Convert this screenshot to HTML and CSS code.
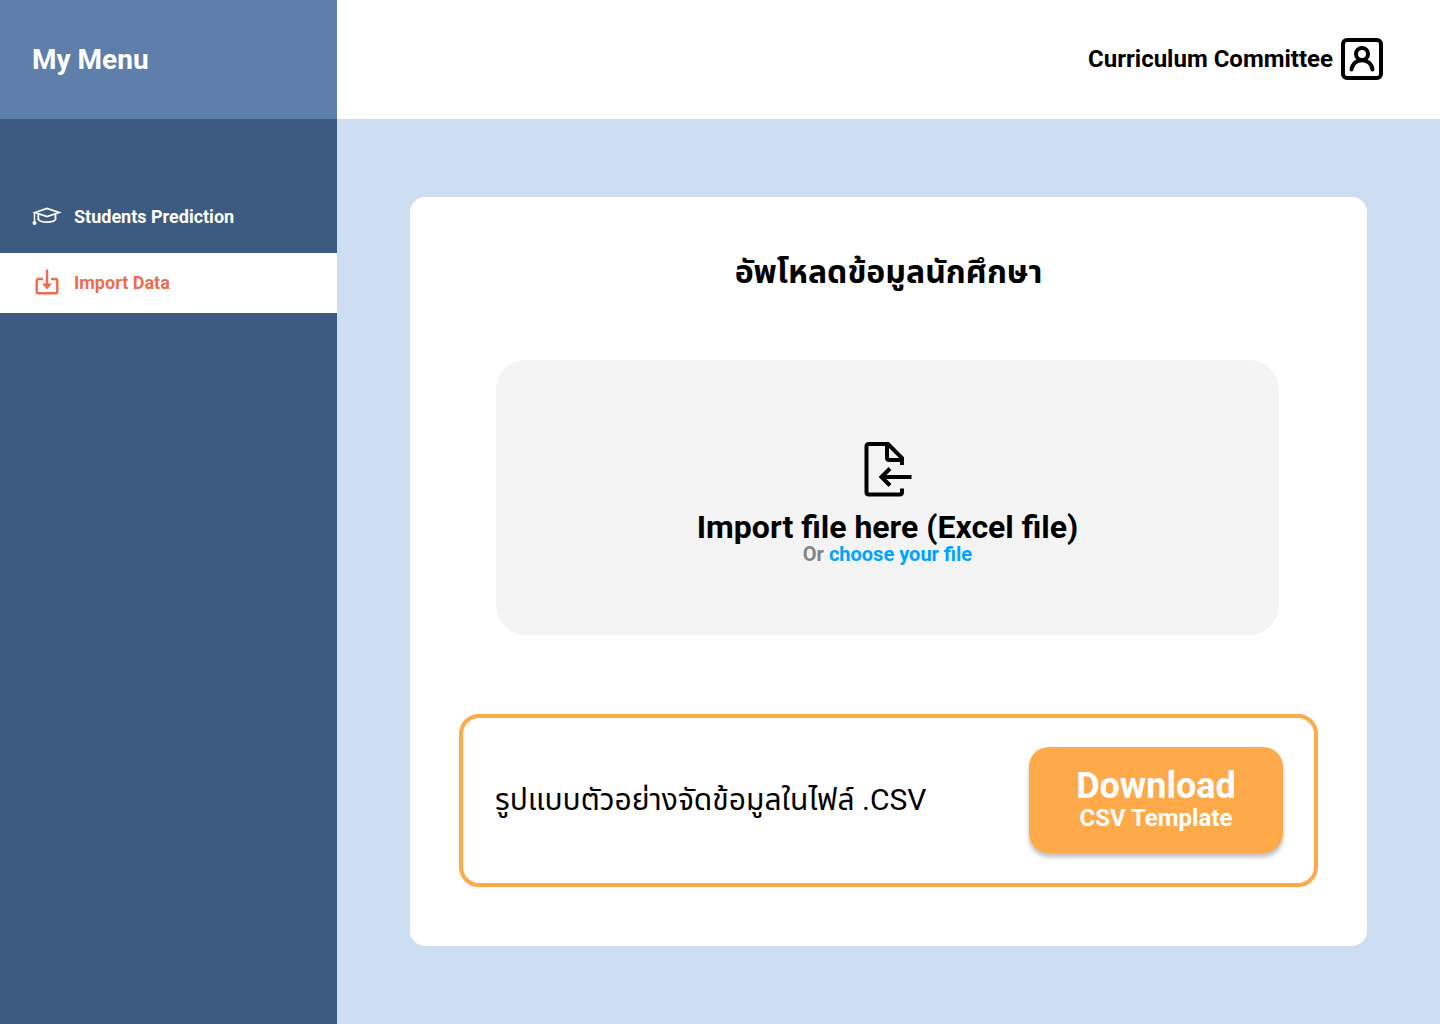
FILE: index.html
```html
<!DOCTYPE html>
<html lang="en">
<head>
<meta charset="utf-8">
<meta name="viewport" content="width=device-width, initial-scale=1">
<title>Import Data</title>
<link rel="stylesheet" href="styles.css">
</head>
<body>
<div class="app">
  <aside class="sidebar">
    <div class="sidebar-title">My Menu</div>
    <nav class="menu">
      <a class="menu-item" href="#students">
        <svg class="menu-icon" viewBox="0 0 30 30" fill="none" stroke="currentColor" stroke-width="1.800" aria-hidden="true">
          <path d="M3 11.500L15 7.500L27 11.500L15 15.500Z"/>
          <path d="M6.300 13V18.500C9 22 21 22 23.500 18.500V13"/>
          <path d="M2.500 11V21" stroke-width="1.500"/>
          <circle cx="2.500" cy="22" r="2" fill="currentColor" stroke="none"/>
        </svg>
        <span>Students Prediction</span>
      </a>
      <a class="menu-item active" href="#import" aria-current="page">
        <svg class="menu-icon" viewBox="0 0 30 30" fill="none" stroke="currentColor" stroke-width="2.400" aria-hidden="true">
          <path d="M11 12H6.500Q4.700 12 4.700 13.800V24.500Q4.700 26.300 6.500 26.300H23.500Q25.300 26.300 25.300 24.500V13.800Q25.300 12 23.500 12H19"/>
          <path d="M15 2.500V18"/>
          <path d="M10 16.500H20L15 22.500Z" fill="currentColor" stroke="none"/>
        </svg>
        <span>Import Data</span>
      </a>
    </nav>
  </aside>
  <div class="page">
    <header class="topbar">
      <span>Curriculum Committee</span>
      <svg class="user-icon" viewBox="0 0 42 42" fill="none" stroke="currentColor" stroke-width="4" stroke-linecap="round" aria-hidden="true">
        <rect x="2" y="2" width="38" height="38" rx="4"/>
        <circle cx="21" cy="16" r="6"/>
        <path d="M10.500 31.500C12 19 30 19 31.500 31.500"/>
      </svg>
    </header>
    <main class="content">
      <section class="card">
        <h1 class="card-title" lang="th">อัพโหลดข้อมูลนักศึกษา</h1>
        <div class="dropzone">
          <svg class="file-icon" viewBox="0 0 48 56" fill="none" stroke="currentColor" stroke-width="4" aria-hidden="true">
            <path d="M38 23V16L24 2H5Q2.500 2 2.500 4.500V50Q2.500 52.500 5 52.500H35.500Q38 52.500 38 50V46.500"/>
            <path d="M23 2V15.500Q23 18 25.500 18H38"/>
            <path d="M47.500 35H17.500M26 26.500L17.500 35L26 43.500"/>
          </svg>
          <p class="drop-title">Import file here (Excel file)</p>
          <p class="drop-sub">Or <a class="choose" href="#choose">choose your file</a></p>
        </div>
        <div class="template">
          <p class="template-text" lang="th">รูปแบบตัวอย่างจัดข้อมูลในไฟล์ .CSV</p>
          <button class="download" type="button">
            <span class="download-main">Download</span>
            <span class="download-sub">CSV Template</span>
          </button>
        </div>
      </section>
    </main>
  </div>
</div>
</body>
</html>
```
FILE: styles.css
```css
* { box-sizing: border-box; }

body {
  margin: 0;
  font-family: Roboto, "Noto Sans Thai", "Noto Sans", sans-serif;
  color: #000;
}

h1, p { margin: 0; }

.app {
  display: grid;
  grid-template-columns: 337px 1fr;
  min-height: 100vh;
}

.sidebar { background: #3d5a80; color: #fff; }

.sidebar-title {
  display: flex;
  align-items: center;
  height: 119px;
  padding: 0 32px;
  background: #5e7faa;
  font-size: 28px;
  font-weight: 700;
}

.menu {
  display: flex;
  flex-direction: column;
  gap: 6px;
  padding-top: 68px;
}

.menu-item {
  display: flex;
  align-items: center;
  gap: 12px;
  height: 60px;
  padding: 0 32px 2px;
  color: #fff;
  font-size: 18px;
  font-weight: 700;
  text-decoration: none;
}

.menu-item.active { background: #fff; color: #ee6c4d; }

.menu-icon { width: 30px; height: 30px; }

.page { display: flex; flex-direction: column; }

.topbar {
  display: flex;
  align-items: center;
  justify-content: flex-end;
  gap: 8px;
  height: 119px;
  padding: 0 57px 1px;
  background: #fff;
  font-size: 24px;
  font-weight: 700;
}

.user-icon { width: 42px; height: 42px; }

.content { flex: 1; padding: 78px 73px; background: #cdddf2; }

.card {
  display: flex;
  flex-direction: column;
  padding: 51px 49px 59px;
  border-radius: 15px;
  background: #fff;
}

.card-title {
  font-size: 32px;
  line-height: 48px;
  font-weight: 700;
  text-align: center;
}

.dropzone {
  display: flex;
  flex-direction: column;
  align-items: center;
  height: 275px;
  margin: 64px 39px 79px 37px;
  padding-top: 82px;
  border-radius: 30px;
  background: #f4f4f4;
  font-weight: 700;
}

.file-icon { width: 48px; height: 56px; margin-bottom: 10px; }

.drop-title { font-size: 32px; line-height: 38px; }

.drop-sub { color: #828282; font-size: 20px; line-height: 16px; }

.choose { color: #00a3ff; text-decoration: none; }

.template {
  display: flex;
  align-items: center;
  justify-content: space-between;
  padding: 29px 31px 30px 32px;
  border: 4px solid #ffaa4a;
  border-radius: 20px;
}

.template-text { font-size: 30px; line-height: 48px; }

.download {
  display: flex;
  flex-direction: column;
  align-items: center;
  justify-content: center;
  width: 254px;
  height: 106px;
  padding: 0;
  border: 0;
  border-radius: 20px;
  background: #ffaa4a;
  box-shadow: 0 4px 4px rgba(0, 0, 0, 0.25);
  color: #fff;
  font-family: inherit;
  font-weight: 700;
}

.download-main { font-size: 36px; line-height: 36px; }

.download-sub { font-size: 24px; line-height: 28px; }
```
